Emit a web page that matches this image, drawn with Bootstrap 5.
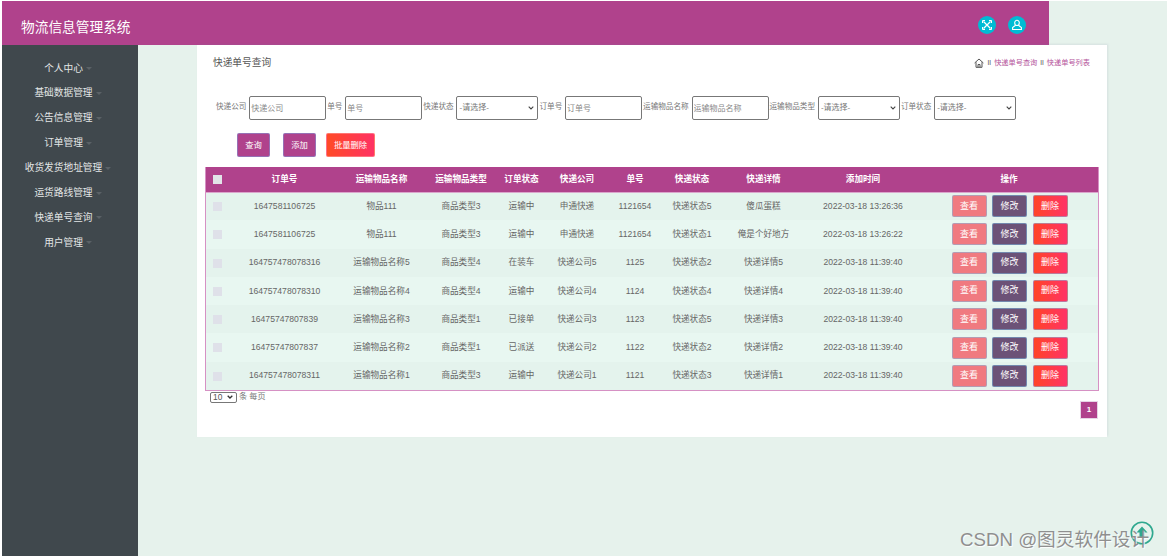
<!DOCTYPE html>
<html lang="zh">
<head>
<meta charset="utf-8">
<title>物流信息管理系统</title>
<link href="https://cdn.jsdelivr.net/npm/bootstrap@5.3.0/dist/css/bootstrap.min.css" rel="stylesheet">
<style>
html,body{height:100%;}
body{margin:0;background:#fff;font-family:"Liberation Sans","Noto Sans CJK SC",sans-serif;color:#666;overflow:hidden;}
.frame{height:559px;padding:1px 0 3px 2px;background:#fff;position:relative;}
.shell{height:100%;background:#e6f2ec;display:flex;flex-direction:column;}
.topbar{width:1047px;height:44px;flex:none;background:#b0428c;padding:0 23px 0 19px;}
.brand{font-size:13.7px;color:#fff;line-height:1;margin-top:9px;}
.roundicon{width:18px;height:18px;border-radius:50%;background:#00bcd4;display:flex;align-items:center;justify-content:center;}
.topicons{gap:12px;margin-top:4px;}
.mainrow{flex:1;min-height:0;display:flex;}
.sidebar{width:136px;flex:none;background:#40484d;padding-top:11.5px;}
.sideitem{height:24.85px;color:#e3e6e6;font-size:9.7px;display:flex;align-items:center;justify-content:center;padding-right:4px;}
.sideitem::after{content:"";margin-left:3px;border-top:3px solid #5a6166;border-left:3px solid transparent;border-right:3px solid transparent;}
.panel{width:910px;height:392px;margin-left:59px;background:#fff;padding:0 8px;box-shadow:1px -1px 2px rgba(120,130,160,.15);}
.crumbrow{height:36px;padding:0 9px 0 8px;}
.crumbtitle{font-size:9.7px;color:#555;}
.crumbs{font-size:7.2px;color:#b5559c;}
.crumbs .sep{color:#666;font-size:8px;margin:0 3px;}
.crumbs svg{margin-right:1px;}
.filters{margin-top:15px;height:24px;padding-left:10px;font-size:7.6px;color:#777;}
.fieldlabel{margin:0 2.85px 2px 1px;white-space:nowrap;}
.fieldbox{height:24px;border:1px solid #777;border-radius:2px;background:#fff;font-size:8px;color:#777;font-family:inherit;padding:1px;outline:none;}
.fieldbox::placeholder{color:#888;}
.boxw{width:77px;}
.selw{width:82px;padding:1px 12px 1px 2px;appearance:none;-webkit-appearance:none;background:#fff url("data:image/svg+xml,%3Csvg xmlns='http://www.w3.org/2000/svg' viewBox='0 0 6 4'%3E%3Cpath d='M.7.7 3 3l2.300-2.300' fill='none' stroke='%23444' stroke-width='1.100'/%3E%3C/svg%3E") no-repeat right 3px center/6px 4px;}
.actions{margin-top:13px;padding-left:32px;}
.actbtn{height:24px;border:1px solid rgba(120,170,230,.45);border-radius:2px;font-size:8.3px;color:#fff;padding:0;}
.actbtn.pink{width:33px;background:#b0428c;margin-right:13px;}
.actbtn.pink + .actbtn.warm{margin-left:-3px;}
.actbtn.warm{width:49px;background:linear-gradient(90deg,#ff4a26,#ff3264);border-color:rgba(255,170,170,.5);}
.tablebox{margin-top:10px;border:1px solid #d691c4;border-top:0;}
.datagrid{table-layout:fixed;width:100%;margin:0;border-collapse:collapse;font-size:8.6px;color:#666;text-align:center;}
.datagrid th{height:25px;background:#b0428c;color:#fff;font-weight:700;font-size:8.6px;padding:0;vertical-align:middle;border:0;border-bottom:1px solid #dba6cd;}
.datagrid td{height:28.3px;padding:0;vertical-align:middle;border:0;color:#666;}
.datagrid th:first-child,.datagrid td:first-child{padding-right:3px;}
.datagrid tbody tr:nth-child(odd) td{background:#e4f3ed;}
.datagrid tbody tr:nth-child(even) td{background:#e8f7f1;}
.c1{width:26px}.c2{width:105px}.c3{width:89px}.c4{width:70px}.c5{width:51px}.c6{width:60px}.c7{width:56px}.c8{width:58px}.c9{width:85px}.c10{width:114px}
.tick{display:inline-block;width:9px;height:9px;background:#dfe1e9;vertical-align:middle;}
thead .tick{background:#e2e4e8;}
.rowbtns{gap:5.5px;padding-left:1px;}
.rowbtn{width:35px;height:22px;border:1px solid rgba(120,190,230,.5);border-radius:2px;color:#fff;font-size:9px;padding:0;}
.rb-view{background:#f07a80;}
.rb-edit{background:#6c5277;}
.rb-del{background:linear-gradient(90deg,#ff4427,#ff3366);}
.tablefoot{height:39px;padding-right:1px;font-size:8.100px;color:#777;}
.sizepick{width:27px;height:11px;font-size:8.4px;padding:0 0 0 2px;border:1px solid #777;border-radius:2px;color:#555;font-family:inherit;margin-left:5px;appearance:none;-webkit-appearance:none;line-height:1;background:#fff url("data:image/svg+xml,%3Csvg xmlns='http://www.w3.org/2000/svg' viewBox='0 0 6 4'%3E%3Cpath d='M.7.7 3 3l2.300-2.300' fill='none' stroke='%23333' stroke-width='1.300'/%3E%3C/svg%3E") no-repeat right 3px center/6px 4px;}
.perpage{margin-left:2px;}
.pagecell{width:18px;height:18px;background:#b0428c;color:#fff;font-size:8px;font-weight:700;border:1px solid #e6d6e6;margin-top:10px;}
.watermark{position:absolute;left:960px;top:530px;font-size:18.7px;line-height:20px;color:#8f8f8f;white-space:nowrap;text-shadow:1px 1px 1px #fff;}
.backtop{position:absolute;left:1130px;top:521px;width:24px;height:24px;}
</style>
</head>
<body>
<div class="frame">
 <div class="shell">
  <header class="topbar d-flex align-items-center justify-content-between">
   <div class="brand">物流信息管理系统</div>
   <div class="topicons d-flex">
    <span class="roundicon"><svg width="12" height="12" viewBox="0 0 12 12" fill="none" stroke="#fff" stroke-width="1.3"><path d="M2.500 2.500l7 7M9.500 2.500l-7 7"/><path d="M1.500 4V1.500H4M8 1.500h2.500V4M10.500 8v2.500H8M4 10.500H1.500V8" stroke-width="1"/></svg></span>
    <span class="roundicon"><svg width="12" height="12" viewBox="0 0 12 12" fill="none" stroke="#fff" stroke-width="1.1"><path d="M6 1.300a2.300 2.300 0 0 1 2.300 2.400c0 1.500-1 2.800-2.300 2.800s-2.300-1.300-2.300-2.800A2.300 2.300 0 0 1 6 1.300z"/><path d="M4.600 6.200 1.600 8.600v1.900h8.800V8.600L7.400 6.200"/></svg></span>
   </div>
  </header>
  <div class="mainrow">
   <nav class="sidebar">
    <div class="sideitem">个人中心</div>
    <div class="sideitem">基础数据管理</div>
    <div class="sideitem">公告信息管理</div>
    <div class="sideitem">订单管理</div>
    <div class="sideitem">收货发货地址管理</div>
    <div class="sideitem">运货路线管理</div>
    <div class="sideitem">快递单号查询</div>
    <div class="sideitem">用户管理</div>
   </nav>
   <main class="panel">
    <div class="crumbrow d-flex align-items-center justify-content-between">
     <div class="crumbtitle">快递单号查询</div>
     <div class="crumbs d-flex align-items-center">
      <svg width="10" height="10" viewBox="0 0 10 10" fill="none" stroke="#555" stroke-width="1"><path d="M.6 5 5 1l4.400 4M2 4.200V9.300h6V4.200M4 9.300V6.500h2v2.800"/></svg>
      <span class="sep">ll</span><span>快递单号查询</span><span class="sep">ll</span><span>快递单号列表</span>
     </div>
    </div>
    <form class="filters d-flex align-items-center">
     <label class="fieldlabel">快递公司</label><input class="fieldbox boxw" placeholder="快递公司">
     <label class="fieldlabel">单号</label><input class="fieldbox boxw" placeholder="单号">
     <label class="fieldlabel">快递状态</label><select class="fieldbox selw"><option>-请选择-</option></select>
     <label class="fieldlabel">订单号</label><input class="fieldbox boxw" placeholder="订单号">
     <label class="fieldlabel">运输物品名称</label><input class="fieldbox boxw" placeholder="运输物品名称">
     <label class="fieldlabel">运输物品类型</label><select class="fieldbox selw"><option>-请选择-</option></select>
     <label class="fieldlabel">订单状态</label><select class="fieldbox selw"><option>-请选择-</option></select>
    </form>
    <div class="actions d-flex">
     <button class="btn actbtn pink">查询</button>
     <button class="btn actbtn pink">添加</button>
     <button class="btn actbtn warm">批量删除</button>
    </div>
    <div class="tablebox">
     <table class="table datagrid">
      <colgroup><col class="c1"><col class="c2"><col class="c3"><col class="c4"><col class="c5"><col class="c6"><col class="c7"><col class="c8"><col class="c9"><col class="c10"><col></colgroup>
      <thead><tr><th><span class="tick"></span></th><th>订单号</th><th>运输物品名称</th><th>运输物品类型</th><th>订单状态</th><th>快递公司</th><th>单号</th><th>快递状态</th><th>快递详情</th><th>添加时间</th><th>操作</th></tr></thead>
      <tbody>
       <tr><td><span class="tick"></span></td><td>1647581106725</td><td>物品111</td><td>商品类型3</td><td>运输中</td><td>申通快递</td><td>1121654</td><td>快递状态5</td><td>傻瓜蛋糕</td><td>2022-03-18 13:26:36</td><td><div class="rowbtns d-flex justify-content-center"><button class="btn rowbtn rb-view">查看</button><button class="btn rowbtn rb-edit">修改</button><button class="btn rowbtn rb-del">删除</button></div></td></tr>
       <tr><td><span class="tick"></span></td><td>1647581106725</td><td>物品111</td><td>商品类型3</td><td>运输中</td><td>申通快递</td><td>1121654</td><td>快递状态1</td><td>俺是个好地方</td><td>2022-03-18 13:26:22</td><td><div class="rowbtns d-flex justify-content-center"><button class="btn rowbtn rb-view">查看</button><button class="btn rowbtn rb-edit">修改</button><button class="btn rowbtn rb-del">删除</button></div></td></tr>
       <tr><td><span class="tick"></span></td><td>164757478078316</td><td>运输物品名称5</td><td>商品类型4</td><td>在装车</td><td>快递公司5</td><td>1125</td><td>快递状态2</td><td>快递详情5</td><td>2022-03-18 11:39:40</td><td><div class="rowbtns d-flex justify-content-center"><button class="btn rowbtn rb-view">查看</button><button class="btn rowbtn rb-edit">修改</button><button class="btn rowbtn rb-del">删除</button></div></td></tr>
       <tr><td><span class="tick"></span></td><td>164757478078310</td><td>运输物品名称4</td><td>商品类型4</td><td>运输中</td><td>快递公司4</td><td>1124</td><td>快递状态4</td><td>快递详情4</td><td>2022-03-18 11:39:40</td><td><div class="rowbtns d-flex justify-content-center"><button class="btn rowbtn rb-view">查看</button><button class="btn rowbtn rb-edit">修改</button><button class="btn rowbtn rb-del">删除</button></div></td></tr>
       <tr><td><span class="tick"></span></td><td>16475747807839</td><td>运输物品名称3</td><td>商品类型1</td><td>已接单</td><td>快递公司3</td><td>1123</td><td>快递状态5</td><td>快递详情3</td><td>2022-03-18 11:39:40</td><td><div class="rowbtns d-flex justify-content-center"><button class="btn rowbtn rb-view">查看</button><button class="btn rowbtn rb-edit">修改</button><button class="btn rowbtn rb-del">删除</button></div></td></tr>
       <tr><td><span class="tick"></span></td><td>16475747807837</td><td>运输物品名称2</td><td>商品类型1</td><td>已派送</td><td>快递公司2</td><td>1122</td><td>快递状态2</td><td>快递详情2</td><td>2022-03-18 11:39:40</td><td><div class="rowbtns d-flex justify-content-center"><button class="btn rowbtn rb-view">查看</button><button class="btn rowbtn rb-edit">修改</button><button class="btn rowbtn rb-del">删除</button></div></td></tr>
       <tr><td><span class="tick"></span></td><td>164757478078311</td><td>运输物品名称1</td><td>商品类型3</td><td>运输中</td><td>快递公司1</td><td>1121</td><td>快递状态3</td><td>快递详情1</td><td>2022-03-18 11:39:40</td><td><div class="rowbtns d-flex justify-content-center"><button class="btn rowbtn rb-view">查看</button><button class="btn rowbtn rb-edit">修改</button><button class="btn rowbtn rb-del">删除</button></div></td></tr>
      </tbody>
     </table>
    </div>
    <div class="tablefoot d-flex justify-content-between align-items-start">
     <div class="d-flex align-items-center"><select class="sizepick"><option>10</option></select><span class="perpage">条 每页</span></div>
     <div class="pagecell d-flex align-items-center justify-content-center">1</div>
    </div>
   </main>
  </div>
 </div>
 <svg class="backtop" viewBox="0 0 24 24"><circle cx="12" cy="12" r="10.700" fill="#e6f2ec" stroke="#2fa88f" stroke-width="1.600"/><path d="M12 5.500 6.500 11.500h3v5.500h5v-5.500h3z" fill="#2fa88f"/></svg>
 <div class="watermark">CSDN @图灵软件设计</div>
</div>
<script src="https://cdn.jsdelivr.net/npm/bootstrap@5.3.0/dist/js/bootstrap.bundle.min.js"></script>
</body>
</html>
